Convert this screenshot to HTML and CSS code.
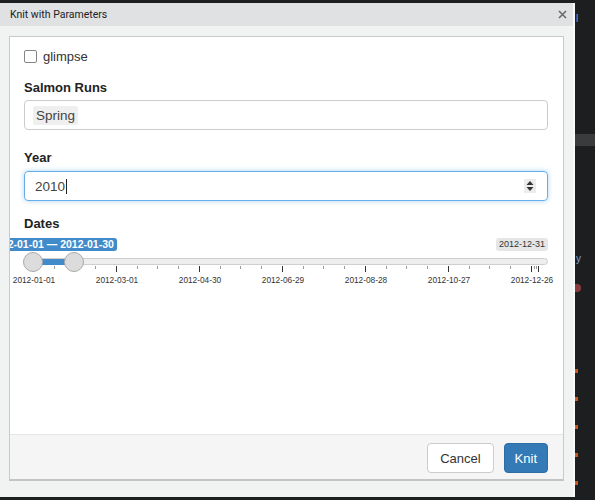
FILE: index.html
```html
<!DOCTYPE html>
<html>
<head>
<meta charset="utf-8">
<link rel="stylesheet" href="styles.css">
</head>
<body>
<div class="screen">
  <div class="dialog">
    <div class="titlebar">
      <span class="title">Knit with Parameters</span>
      <svg class="close" width="9" height="9" viewBox="0 0 9 9"><path d="M1 1L8 8M8 1L1 8" stroke="#6b6b6b" stroke-width="1.6" fill="none"/></svg>
    </div>
    <div class="frame">
      <div class="content">
        <label class="check"><span class="box"></span>glimpse</label>

        <div class="label lbl-salmon">Salmon Runs</div>
        <div class="input"><span class="tag">Spring</span></div>

        <div class="label lbl-year">Year</div>
        <div class="input focused">
          <span class="value">2010</span><span class="caret"></span>
          <span class="spin">
            <svg width="12" height="14" viewBox="0 0 12 14"><path d="M6 2L9.5 6H2.5Z M6 12L9.5 8H2.5Z" fill="#333"/></svg>
          </span>
        </div>

        <div class="label lbl-dates">Dates</div>
        <div class="slider">
          <div class="track"></div>
          <div class="bar"></div>
          <div class="ticks">
            <span class="tick major" style="left:9px"></span>
            <span class="tick" style="left:30px"></span>
            <span class="tick" style="left:50px"></span>
            <span class="tick" style="left:71px"></span>
            <span class="tick major" style="left:92px"></span>
            <span class="tick" style="left:113px"></span>
            <span class="tick" style="left:133px"></span>
            <span class="tick" style="left:154px"></span>
            <span class="tick major" style="left:175px"></span>
            <span class="tick" style="left:196px"></span>
            <span class="tick" style="left:216px"></span>
            <span class="tick" style="left:237px"></span>
            <span class="tick major" style="left:258px"></span>
            <span class="tick" style="left:279px"></span>
            <span class="tick" style="left:299px"></span>
            <span class="tick" style="left:320px"></span>
            <span class="tick major" style="left:341px"></span>
            <span class="tick" style="left:362px"></span>
            <span class="tick" style="left:382px"></span>
            <span class="tick" style="left:403px"></span>
            <span class="tick major" style="left:424px"></span>
            <span class="tick" style="left:445px"></span>
            <span class="tick" style="left:465px"></span>
            <span class="tick" style="left:486px"></span>
            <span class="tick major" style="left:507px"></span>
            <span class="tick" style="left:510px"></span>
            <span class="tick" style="left:512px"></span>
            <span class="tick major" style="left:514px"></span>
          </div>
          <div class="grid-labels">
            <span style="left:10px">2012-01-01</span>
            <span style="left:93px">2012-03-01</span>
            <span style="left:176px">2012-04-30</span>
            <span style="left:259px">2012-06-29</span>
            <span style="left:342px">2012-08-28</span>
            <span style="left:425px">2012-10-27</span>
            <span style="left:508px">2012-12-26</span>
          </div>
          <span class="handle" style="left:9px"></span>
          <span class="handle" style="left:50px"></span>
          <span class="range-label">2012-01-01 — 2012-01-30</span>
          <span class="max-label">2012-12-31</span>
        </div>
      </div>
      <div class="footer">
        <button class="btn btn-cancel">Cancel</button>
        <button class="btn btn-knit">Knit</button>
      </div>
    </div>
  </div>
  <div class="side">
    <span class="side-text">l</span>
    <span class="side-block"></span>
    <span class="side-text side-y">y</span>
    <span class="side-dot"></span>
    <div class="marks">
      <span class="mark"></span>
      <span class="mark"></span>
      <span class="mark"></span>
      <span class="mark"></span>
      <span class="mark"></span>
    </div>
  </div>
</div>
</body>
</html>
```

FILE: styles.css
```css
* { box-sizing: border-box; }
html, body { margin: 0; padding: 0; }
body {
  width: 595px;
  height: 500px;
  overflow: hidden;
  background: #1d1e20;
  font-family: "Liberation Sans", Arial, sans-serif;
}
.screen {
  display: flex;
  height: 500px;
}
.dialog {
  width: 575px;
  height: 494px;
  margin-top: 3px;
  background: #f1f2f2;
  border-right: 2px solid #f9f9f9;
  display: flex;
  flex-direction: column;
}
.titlebar {
  height: 23px;
  flex: none;
  background: #e0e1e3;
  display: flex;
  align-items: center;
  justify-content: space-between;
  padding: 0 6px 0 10px;
}
.title {
  font-family: Roboto, sans-serif;
  font-size: 10.5px;
  color: #222;
}
.close { display: block; }
.frame {
  flex: 1;
  margin: 10px 9px 16px 9px;
  background: #fff;
  border: 1px solid #c9c9c9;
  border-bottom: 2px solid #c3c3c3;
  display: flex;
  flex-direction: column;
  overflow: hidden;
}
.content {
  flex: 1;
  padding: 11px 15px 0 14px;
}
.check {
  display: flex;
  align-items: center;
  gap: 6px;
  height: 16px;
  font-size: 13px;
  color: #333;
}
.box {
  width: 13px;
  height: 13px;
  border: 1px solid #858585;
  border-radius: 2px;
  background: #fff;
}
.label {
  font-weight: bold;
  font-size: 13px;
  line-height: 16px;
  color: #222;
}
.lbl-salmon { margin: 16px 0 4px; }
.lbl-year { margin: 20px 0 5px; }
.lbl-dates { margin: 15px 0 0; }
.input {
  height: 30px;
  border: 1px solid #cccccc;
  border-radius: 4px;
  display: flex;
  align-items: center;
  padding: 0 8px;
  font-size: 13.5px;
  color: #555;
}
.tag {
  background: #efefef;
  border-radius: 2px;
  padding: 2px 3px;
  line-height: 15px;
  color: #444;
}
.focused {
  border-color: #66afe9;
  box-shadow: 0 0 5px rgba(102, 175, 233, 0.55);
  padding: 0 11px 0 10px;
}
.value { color: #444; }
.caret {
  width: 1px;
  height: 15px;
  background: #222;
  margin-left: 1px;
}
.spin {
  margin-left: auto;
  width: 12px;
  height: 14px;
  background: #ececec;
  display: flex;
}
.slider {
  position: relative;
  height: 60px;
  margin-top: 6px;
}
.track {
  position: absolute;
  left: 0;
  top: 20px;
  width: 524px;
  height: 7px;
  background: #eeeeee;
  border: 1px solid #cfcfcf;
  border-radius: 4px;
}
.bar {
  position: absolute;
  left: 9px;
  top: 21px;
  width: 41px;
  height: 6px;
  background: #428bca;
}
.ticks .tick {
  position: absolute;
  top: 28px;
  width: 1px;
  height: 3px;
  background: #9a9a9a;
}
.ticks .major {
  height: 6px;
  background: #333;
}
.grid-labels span {
  position: absolute;
  top: 37px;
  transform: translateX(-50%);
  font-size: 8.3px;
  line-height: 10px;
  color: #333;
  white-space: nowrap;
}
.handle {
  position: absolute;
  top: 14px;
  width: 20px;
  height: 20px;
  margin-left: -10px;
  border-radius: 50%;
  background: #dcdcdc;
  border: 1px solid #ababab;
}
.range-label {
  position: absolute;
  top: 0;
  left: 28px;
  transform: translateX(-50%);
  background: #428bca;
  color: #fff;
  font-weight: bold;
  font-size: 10.5px;
  line-height: 13px;
  padding: 0 3px;
  border-radius: 3px;
  white-space: nowrap;
}
.max-label {
  position: absolute;
  top: 0;
  right: 0;
  background: #e6e6e6;
  color: #333;
  font-size: 9px;
  line-height: 13px;
  padding: 0 3px;
  border-radius: 3px;
}
.footer {
  height: 45px;
  flex: none;
  background: #f5f5f5;
  border-top: 1px solid #e5e5e5;
  display: flex;
  justify-content: flex-end;
  align-items: flex-start;
  gap: 10px;
  padding: 8px 15px 0 0;
}
.btn {
  height: 30px;
  border-radius: 4px;
  font-family: "Liberation Sans", Arial, sans-serif;
  font-size: 13px;
  border: 1px solid #cccccc;
}
.btn-cancel {
  background: #fff;
  color: #333;
  padding: 0 12px;
}
.btn-knit {
  background: #337ab7;
  border-color: #2e6da4;
  color: #fff;
  padding: 0 10px;
}
.side {
  flex: 1;
  display: flex;
  flex-direction: column;
  background: #1d1e20;
}
.side-text {
  font-size: 10px;
  color: #7fa3c7;
  margin-top: 14px;
  padding-left: 1px;
  line-height: 10px;
}
.side-block {
  height: 12px;
  background: #3a3b3d;
  margin-top: 110px;
}
.side-y { margin-top: 108px; }
.side-dot {
  width: 6px;
  height: 8px;
  background: #8a3a3a;
  border-radius: 0 4px 4px 0;
  margin-top: 20px;
}
.marks {
  margin-top: auto;
  display: flex;
  flex-direction: column;
  gap: 24px;
  padding-bottom: 15px;
}
.mark {
  width: 3px;
  height: 4px;
  background: #c8581c;
}
```
